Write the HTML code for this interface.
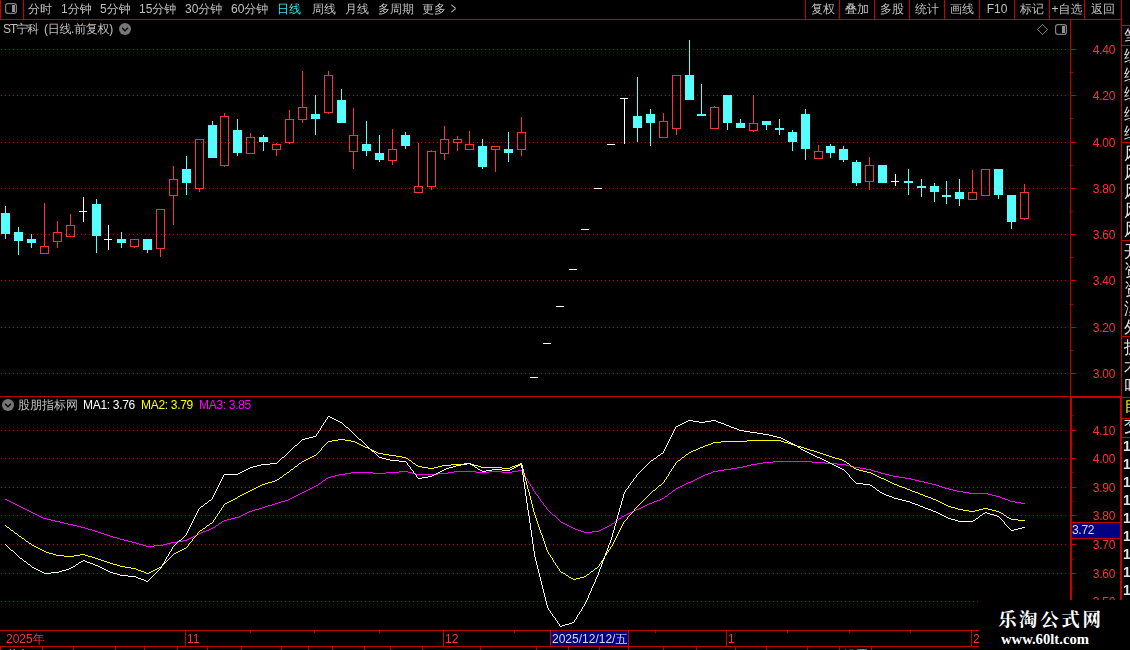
<!DOCTYPE html>
<html lang="zh-CN"><head><meta charset="utf-8"><title>ST宁科 日线</title>
<style>
html,body{margin:0;padding:0;background:#000;}
body{width:1130px;height:650px;overflow:hidden;position:relative;font-family:"Liberation Sans","WenQuanYi Zen Hei",sans-serif;}
#chart{position:absolute;left:0;top:0;}
#txt{position:absolute;left:0;top:0;width:1130px;height:650px;will-change:transform;}
.t{position:absolute;color:#c0c0c0;font-size:12px;line-height:15px;white-space:nowrap;}
.ax{letter-spacing:-0.3px;}
#strip{position:absolute;left:1123px;top:20px;width:7px;height:580px;overflow:hidden;}
#strip .s{position:absolute;left:1px;font-size:17px;line-height:17px;width:18px;margin-top:-21px;}
#strip .b{font-weight:bold;font-size:14px;left:0px;}
#bot{position:absolute;left:0;top:647px;width:979px;height:3px;overflow:hidden;}
#wm{position:absolute;left:979px;top:600px;width:151px;height:50px;background:#000;overflow:hidden;}
#wm1{position:absolute;left:19px;top:5px;font:bold 18.5px/30px "Liberation Serif","Noto Serif CJK SC",serif;letter-spacing:2.6px;color:#fff;white-space:nowrap;}
#wm2{position:absolute;left:22px;top:29px;font:bold 14.67px/20px "Liberation Serif",serif;color:#fff;white-space:nowrap;}
</style></head><body>
<svg id="chart" width="1130" height="650" viewBox="0 0 1130 650" shape-rendering="crispEdges">
<line x1="1" x2="1067" y1="49.5" y2="49.5" stroke="#c40000" stroke-width="1" stroke-dasharray="1 3"/>
<line x1="1" x2="1067" y1="95.5" y2="95.5" stroke="#c40000" stroke-width="1" stroke-dasharray="1 3"/>
<line x1="1" x2="1067" y1="142.5" y2="142.5" stroke="#c40000" stroke-width="1" stroke-dasharray="1 3"/>
<line x1="1" x2="1067" y1="188.5" y2="188.5" stroke="#c40000" stroke-width="1" stroke-dasharray="1 3"/>
<line x1="1" x2="1067" y1="234.5" y2="234.5" stroke="#c40000" stroke-width="1" stroke-dasharray="1 3"/>
<line x1="1" x2="1067" y1="280.5" y2="280.5" stroke="#c40000" stroke-width="1" stroke-dasharray="1 3"/>
<line x1="1" x2="1067" y1="327.5" y2="327.5" stroke="#c40000" stroke-width="1" stroke-dasharray="1 3"/>
<line x1="1" x2="1067" y1="373.5" y2="373.5" stroke="#c40000" stroke-width="1" stroke-dasharray="1 3"/>
<line x1="1" x2="1067" y1="430.5" y2="430.5" stroke="#c40000" stroke-width="1" stroke-dasharray="1 3"/>
<line x1="1" x2="1067" y1="458.5" y2="458.5" stroke="#c40000" stroke-width="1" stroke-dasharray="1 3"/>
<line x1="1" x2="1067" y1="487.5" y2="487.5" stroke="#c40000" stroke-width="1" stroke-dasharray="1 3"/>
<line x1="1" x2="1067" y1="515.5" y2="515.5" stroke="#c40000" stroke-width="1" stroke-dasharray="1 3"/>
<line x1="1" x2="1067" y1="544.5" y2="544.5" stroke="#c40000" stroke-width="1" stroke-dasharray="1 3"/>
<line x1="1" x2="1067" y1="573.5" y2="573.5" stroke="#c40000" stroke-width="1" stroke-dasharray="1 3"/>
<line x1="1" x2="1067" y1="601.5" y2="601.5" stroke="#c40000" stroke-width="1" stroke-dasharray="1 3"/>
<rect x="0" y="19" width="1122" height="1" fill="#c40000"/>
<rect x="0" y="0" width="1" height="20" fill="#c40000"/>
<rect x="23" y="0" width="1" height="20" fill="#c40000"/>
<rect x="805" y="0" width="1" height="20" fill="#c40000"/>
<rect x="839" y="0" width="1" height="20" fill="#c40000"/>
<rect x="874" y="0" width="1" height="20" fill="#c40000"/>
<rect x="909" y="0" width="1" height="20" fill="#c40000"/>
<rect x="944" y="0" width="1" height="20" fill="#c40000"/>
<rect x="979" y="0" width="1" height="20" fill="#c40000"/>
<rect x="1014" y="0" width="1" height="20" fill="#c40000"/>
<rect x="1049" y="0" width="1" height="20" fill="#c40000"/>
<rect x="1084" y="0" width="1" height="20" fill="#c40000"/>
<rect x="1121" y="0" width="1" height="396" fill="#c40000"/>
<rect x="1070" y="19" width="1" height="377" fill="#c40000"/>
<rect x="0" y="396" width="1070" height="1" fill="#c40000"/>
<rect x="1070" y="396" width="52" height="2" fill="#c40000"/>
<rect x="1122" y="397" width="8" height="1" fill="#c40000"/>
<rect x="1070" y="396" width="2" height="204" fill="#c40000"/>
<rect x="1120" y="396" width="2" height="204" fill="#c40000"/>
<rect x="0" y="630" width="979" height="1" fill="#c40000"/>
<rect x="0" y="646" width="979" height="1" fill="#c40000"/>
<rect x="0" y="646" width="1" height="4" fill="#c40000"/>
<rect x="1071" y="49" width="5" height="1" fill="#c40000"/>
<rect x="1071" y="72" width="2" height="1" fill="#c40000"/>
<rect x="1071" y="95" width="5" height="1" fill="#c40000"/>
<rect x="1071" y="118" width="2" height="1" fill="#c40000"/>
<rect x="1071" y="142" width="5" height="1" fill="#c40000"/>
<rect x="1071" y="165" width="2" height="1" fill="#c40000"/>
<rect x="1071" y="188" width="5" height="1" fill="#c40000"/>
<rect x="1071" y="211" width="2" height="1" fill="#c40000"/>
<rect x="1071" y="234" width="5" height="1" fill="#c40000"/>
<rect x="1071" y="257" width="2" height="1" fill="#c40000"/>
<rect x="1071" y="280" width="5" height="1" fill="#c40000"/>
<rect x="1071" y="304" width="2" height="1" fill="#c40000"/>
<rect x="1071" y="327" width="5" height="1" fill="#c40000"/>
<rect x="1071" y="350" width="2" height="1" fill="#c40000"/>
<rect x="1071" y="373" width="5" height="1" fill="#c40000"/>
<rect x="1072" y="430" width="4" height="1" fill="#c40000"/>
<rect x="1072" y="458" width="4" height="1" fill="#c40000"/>
<rect x="1072" y="487" width="4" height="1" fill="#c40000"/>
<rect x="1072" y="515" width="4" height="1" fill="#c40000"/>
<rect x="1072" y="544" width="4" height="1" fill="#c40000"/>
<rect x="1072" y="573" width="4" height="1" fill="#c40000"/>
<rect x="1072" y="415" width="1" height="1" fill="#c40000"/>
<rect x="1072" y="444" width="1" height="1" fill="#c40000"/>
<rect x="1072" y="472" width="1" height="1" fill="#c40000"/>
<rect x="1072" y="501" width="1" height="1" fill="#c40000"/>
<rect x="1072" y="530" width="1" height="1" fill="#c40000"/>
<rect x="1072" y="559" width="1" height="1" fill="#c40000"/>
<rect x="1072" y="587" width="1" height="1" fill="#c40000"/>
<rect x="185" y="630" width="1" height="16" fill="#c40000"/>
<rect x="443" y="630" width="1" height="16" fill="#c40000"/>
<rect x="726" y="630" width="1" height="16" fill="#c40000"/>
<rect x="971" y="630" width="1" height="16" fill="#c40000"/>
<rect x="250" y="630" width="1" height="3" fill="#c40000"/>
<rect x="314" y="630" width="1" height="3" fill="#c40000"/>
<rect x="379" y="630" width="1" height="3" fill="#c40000"/>
<rect x="514" y="630" width="1" height="3" fill="#c40000"/>
<rect x="655" y="630" width="1" height="3" fill="#c40000"/>
<rect x="787" y="630" width="1" height="3" fill="#c40000"/>
<rect x="849" y="630" width="1" height="3" fill="#c40000"/>
<rect x="910" y="630" width="1" height="3" fill="#c40000"/>
<rect x="42" y="646" width="1" height="4" fill="#c40000"/>
<rect x="73" y="646" width="1" height="4" fill="#c40000"/>
<rect x="115" y="646" width="1" height="4" fill="#c40000"/>
<rect x="144" y="646" width="1" height="4" fill="#c40000"/>
<rect x="177" y="646" width="1" height="4" fill="#c40000"/>
<rect x="207" y="646" width="1" height="4" fill="#c40000"/>
<rect x="241" y="646" width="1" height="4" fill="#c40000"/>
<rect x="281" y="646" width="1" height="4" fill="#c40000"/>
<rect x="308" y="646" width="1" height="4" fill="#c40000"/>
<rect x="332" y="646" width="1" height="4" fill="#c40000"/>
<rect x="364" y="646" width="1" height="4" fill="#c40000"/>
<rect x="390" y="646" width="1" height="4" fill="#c40000"/>
<rect x="422" y="646" width="1" height="4" fill="#c40000"/>
<rect x="480" y="646" width="1" height="4" fill="#c40000"/>
<rect x="536" y="646" width="1" height="4" fill="#c40000"/>
<rect x="568" y="646" width="1" height="4" fill="#c40000"/>
<rect x="599" y="646" width="1" height="4" fill="#c40000"/>
<rect x="628" y="646" width="1" height="4" fill="#c40000"/>
<rect x="663" y="646" width="1" height="4" fill="#c40000"/>
<rect x="696" y="646" width="1" height="4" fill="#c40000"/>
<rect x="735" y="646" width="1" height="4" fill="#c40000"/>
<rect x="766" y="646" width="1" height="4" fill="#c40000"/>
<rect x="807" y="646" width="1" height="4" fill="#c40000"/>
<rect x="871" y="646" width="1" height="4" fill="#c40000"/>
<rect x="839" y="646" width="1" height="4" fill="#c40000"/>
<rect x="1122" y="25" width="8" height="1" fill="#c40000"/>
<rect x="1122" y="45" width="8" height="1" fill="#c40000"/>
<rect x="1122" y="142" width="8" height="1" fill="#c40000"/>
<rect x="1122" y="240" width="8" height="1" fill="#c40000"/>
<rect x="1122" y="336" width="8" height="1" fill="#c40000"/>
<rect x="1122" y="418" width="8" height="1" fill="#c40000"/>
<rect x="1122" y="437" width="8" height="1" fill="#c40000"/>
<rect x="5" y="206" width="1" height="33" fill="#54ffff"/>
<rect x="1" y="213" width="9" height="21" fill="#54ffff"/>
<rect x="18" y="227" width="1" height="28" fill="#54ffff"/>
<rect x="14" y="232" width="9" height="9" fill="#54ffff"/>
<rect x="31" y="234" width="1" height="14" fill="#54ffff"/>
<rect x="27" y="239" width="9" height="4" fill="#54ffff"/>
<rect x="44" y="203" width="1" height="43" fill="#ff3232"/>
<rect x="40.5" y="246.5" width="8" height="7" fill="none" stroke="#ff3232" stroke-width="1"/>
<rect x="57" y="221" width="1" height="11" fill="#ff3232"/>
<rect x="57" y="242" width="1" height="6" fill="#ff3232"/>
<rect x="53.5" y="232.5" width="8" height="9" fill="none" stroke="#ff3232" stroke-width="1"/>
<rect x="70" y="214" width="1" height="11" fill="#ff3232"/>
<rect x="66.5" y="225.5" width="8" height="11" fill="none" stroke="#ff3232" stroke-width="1"/>
<rect x="83" y="197" width="1" height="25" fill="#fff"/>
<rect x="79" y="211" width="8" height="1" fill="#fff"/>
<rect x="96" y="199" width="1" height="54" fill="#54ffff"/>
<rect x="92" y="204" width="9" height="32" fill="#54ffff"/>
<rect x="108" y="225" width="1" height="25" fill="#fff"/>
<rect x="104" y="239" width="8" height="1" fill="#fff"/>
<rect x="121" y="232" width="1" height="16" fill="#54ffff"/>
<rect x="117" y="239" width="9" height="4" fill="#54ffff"/>
<rect x="134" y="247" width="1" height="1" fill="#ff3232"/>
<rect x="130.5" y="239.5" width="8" height="7" fill="none" stroke="#ff3232" stroke-width="1"/>
<rect x="147" y="239" width="1" height="14" fill="#54ffff"/>
<rect x="143" y="239" width="9" height="11" fill="#54ffff"/>
<rect x="160" y="249" width="1" height="8" fill="#ff3232"/>
<rect x="156.5" y="209.5" width="8" height="39" fill="none" stroke="#ff3232" stroke-width="1"/>
<rect x="173" y="166" width="1" height="13" fill="#ff3232"/>
<rect x="173" y="196" width="1" height="29" fill="#ff3232"/>
<rect x="169.5" y="179.5" width="8" height="16" fill="none" stroke="#ff3232" stroke-width="1"/>
<rect x="186" y="156" width="1" height="39" fill="#54ffff"/>
<rect x="182" y="169" width="9" height="14" fill="#54ffff"/>
<rect x="199" y="189" width="1" height="3" fill="#ff3232"/>
<rect x="195.5" y="139.5" width="8" height="49" fill="none" stroke="#ff3232" stroke-width="1"/>
<rect x="212" y="121" width="1" height="37" fill="#54ffff"/>
<rect x="208" y="125" width="9" height="33" fill="#54ffff"/>
<rect x="224" y="113" width="1" height="3" fill="#ff3232"/>
<rect x="224" y="166" width="1" height="1" fill="#ff3232"/>
<rect x="220.5" y="116.5" width="8" height="49" fill="none" stroke="#ff3232" stroke-width="1"/>
<rect x="237" y="119" width="1" height="37" fill="#54ffff"/>
<rect x="233" y="130" width="9" height="23" fill="#54ffff"/>
<rect x="250" y="133" width="1" height="4" fill="#ff3232"/>
<rect x="246.5" y="137.5" width="8" height="16" fill="none" stroke="#ff3232" stroke-width="1"/>
<rect x="263" y="135" width="1" height="16" fill="#54ffff"/>
<rect x="259" y="137" width="9" height="5" fill="#54ffff"/>
<rect x="276" y="143" width="1" height="1" fill="#ff3232"/>
<rect x="276" y="150" width="1" height="6" fill="#ff3232"/>
<rect x="272.5" y="144.5" width="8" height="5" fill="none" stroke="#ff3232" stroke-width="1"/>
<rect x="289" y="110" width="1" height="9" fill="#ff3232"/>
<rect x="289" y="143" width="1" height="1" fill="#ff3232"/>
<rect x="285.5" y="119.5" width="8" height="23" fill="none" stroke="#ff3232" stroke-width="1"/>
<rect x="302" y="71" width="1" height="36" fill="#ff3232"/>
<rect x="302" y="120" width="1" height="3" fill="#ff3232"/>
<rect x="298.5" y="107.5" width="8" height="12" fill="none" stroke="#ff3232" stroke-width="1"/>
<rect x="315" y="95" width="1" height="40" fill="#54ffff"/>
<rect x="311" y="114" width="9" height="5" fill="#54ffff"/>
<rect x="328" y="71" width="1" height="4" fill="#ff3232"/>
<rect x="328" y="113" width="1" height="1" fill="#ff3232"/>
<rect x="324.5" y="75.5" width="8" height="37" fill="none" stroke="#ff3232" stroke-width="1"/>
<rect x="341" y="89" width="1" height="34" fill="#54ffff"/>
<rect x="337" y="100" width="9" height="23" fill="#54ffff"/>
<rect x="353" y="108" width="1" height="27" fill="#ff3232"/>
<rect x="353" y="152" width="1" height="17" fill="#ff3232"/>
<rect x="349.5" y="135.5" width="8" height="16" fill="none" stroke="#ff3232" stroke-width="1"/>
<rect x="366" y="121" width="1" height="35" fill="#54ffff"/>
<rect x="362" y="144" width="9" height="7" fill="#54ffff"/>
<rect x="379" y="135" width="1" height="27" fill="#54ffff"/>
<rect x="375" y="153" width="9" height="7" fill="#54ffff"/>
<rect x="392" y="129" width="1" height="20" fill="#ff3232"/>
<rect x="392" y="161" width="1" height="4" fill="#ff3232"/>
<rect x="388.5" y="149.5" width="8" height="11" fill="none" stroke="#ff3232" stroke-width="1"/>
<rect x="405" y="132" width="1" height="17" fill="#54ffff"/>
<rect x="401" y="135" width="9" height="11" fill="#54ffff"/>
<rect x="418" y="143" width="1" height="43" fill="#ff3232"/>
<rect x="414.5" y="186.5" width="8" height="6" fill="none" stroke="#ff3232" stroke-width="1"/>
<rect x="431" y="150" width="1" height="1" fill="#ff3232"/>
<rect x="431" y="187" width="1" height="3" fill="#ff3232"/>
<rect x="427.5" y="151.5" width="8" height="35" fill="none" stroke="#ff3232" stroke-width="1"/>
<rect x="444" y="126" width="1" height="13" fill="#ff3232"/>
<rect x="444" y="154" width="1" height="6" fill="#ff3232"/>
<rect x="440.5" y="139.5" width="8" height="14" fill="none" stroke="#ff3232" stroke-width="1"/>
<rect x="457" y="136" width="1" height="3" fill="#ff3232"/>
<rect x="457" y="143" width="1" height="8" fill="#ff3232"/>
<rect x="453.5" y="139.5" width="8" height="3" fill="none" stroke="#ff3232" stroke-width="1"/>
<rect x="469" y="131" width="1" height="13" fill="#ff3232"/>
<rect x="465.5" y="144.5" width="8" height="5" fill="none" stroke="#ff3232" stroke-width="1"/>
<rect x="482" y="139" width="1" height="30" fill="#54ffff"/>
<rect x="478" y="146" width="9" height="21" fill="#54ffff"/>
<rect x="495" y="150" width="1" height="22" fill="#ff3232"/>
<rect x="491.5" y="146.5" width="8" height="3" fill="none" stroke="#ff3232" stroke-width="1"/>
<rect x="508" y="132" width="1" height="30" fill="#54ffff"/>
<rect x="504" y="149" width="9" height="4" fill="#54ffff"/>
<rect x="521" y="117" width="1" height="15" fill="#ff3232"/>
<rect x="521" y="150" width="1" height="6" fill="#ff3232"/>
<rect x="517.5" y="132.5" width="8" height="17" fill="none" stroke="#ff3232" stroke-width="1"/>
<rect x="530" y="377" width="8" height="1" fill="#fff"/>
<rect x="543" y="343" width="8" height="1" fill="#fff"/>
<rect x="556" y="306" width="8" height="1" fill="#fff"/>
<rect x="569" y="269" width="8" height="1" fill="#fff"/>
<rect x="581" y="229" width="8" height="1" fill="#fff"/>
<rect x="594" y="188" width="8" height="1" fill="#fff"/>
<rect x="607" y="144" width="8" height="1" fill="#fff"/>
<rect x="624" y="98" width="1" height="46" fill="#fff"/>
<rect x="620" y="98" width="8" height="1" fill="#fff"/>
<rect x="637" y="77" width="1" height="65" fill="#54ffff"/>
<rect x="633" y="116" width="9" height="12" fill="#54ffff"/>
<rect x="650" y="109" width="1" height="37" fill="#54ffff"/>
<rect x="646" y="114" width="9" height="9" fill="#54ffff"/>
<rect x="663" y="113" width="1" height="8" fill="#ff3232"/>
<rect x="659.5" y="121.5" width="8" height="16" fill="none" stroke="#ff3232" stroke-width="1"/>
<rect x="676" y="129" width="1" height="6" fill="#ff3232"/>
<rect x="672.5" y="75.5" width="8" height="53" fill="none" stroke="#ff3232" stroke-width="1"/>
<rect x="689" y="40" width="1" height="60" fill="#54ffff"/>
<rect x="685" y="75" width="9" height="25" fill="#54ffff"/>
<rect x="701" y="84" width="1" height="32" fill="#54ffff"/>
<rect x="697" y="114" width="9" height="2" fill="#54ffff"/>
<rect x="714" y="106" width="1" height="1" fill="#ff3232"/>
<rect x="710.5" y="107.5" width="8" height="21" fill="none" stroke="#ff3232" stroke-width="1"/>
<rect x="727" y="95" width="1" height="35" fill="#54ffff"/>
<rect x="723" y="95" width="9" height="28" fill="#54ffff"/>
<rect x="740" y="119" width="1" height="9" fill="#54ffff"/>
<rect x="736" y="123" width="9" height="5" fill="#54ffff"/>
<rect x="753" y="95" width="1" height="28" fill="#ff3232"/>
<rect x="753" y="131" width="1" height="1" fill="#ff3232"/>
<rect x="749.5" y="123.5" width="8" height="7" fill="none" stroke="#ff3232" stroke-width="1"/>
<rect x="766" y="121" width="1" height="9" fill="#54ffff"/>
<rect x="762" y="121" width="9" height="4" fill="#54ffff"/>
<rect x="779" y="119" width="1" height="16" fill="#54ffff"/>
<rect x="775" y="128" width="9" height="2" fill="#54ffff"/>
<rect x="792" y="130" width="1" height="21" fill="#54ffff"/>
<rect x="788" y="132" width="9" height="10" fill="#54ffff"/>
<rect x="805" y="109" width="1" height="51" fill="#54ffff"/>
<rect x="801" y="114" width="9" height="35" fill="#54ffff"/>
<rect x="818" y="145" width="1" height="6" fill="#ff3232"/>
<rect x="814.5" y="151.5" width="8" height="7" fill="none" stroke="#ff3232" stroke-width="1"/>
<rect x="830" y="144" width="1" height="14" fill="#54ffff"/>
<rect x="826" y="146" width="9" height="7" fill="#54ffff"/>
<rect x="843" y="146" width="1" height="16" fill="#54ffff"/>
<rect x="839" y="149" width="9" height="11" fill="#54ffff"/>
<rect x="856" y="160" width="1" height="26" fill="#54ffff"/>
<rect x="852" y="162" width="9" height="21" fill="#54ffff"/>
<rect x="869" y="157" width="1" height="8" fill="#ff3232"/>
<rect x="869" y="182" width="1" height="8" fill="#ff3232"/>
<rect x="865.5" y="165.5" width="8" height="16" fill="none" stroke="#ff3232" stroke-width="1"/>
<rect x="878" y="165" width="9" height="18" fill="#54ffff"/>
<rect x="895" y="174" width="1" height="12" fill="#fff"/>
<rect x="891" y="181" width="8" height="1" fill="#fff"/>
<rect x="908" y="169" width="1" height="26" fill="#54ffff"/>
<rect x="904" y="181" width="9" height="2" fill="#54ffff"/>
<rect x="921" y="179" width="1" height="18" fill="#54ffff"/>
<rect x="917" y="186" width="9" height="2" fill="#54ffff"/>
<rect x="934" y="183" width="1" height="19" fill="#54ffff"/>
<rect x="930" y="186" width="9" height="6" fill="#54ffff"/>
<rect x="946" y="181" width="1" height="23" fill="#54ffff"/>
<rect x="942" y="195" width="9" height="2" fill="#54ffff"/>
<rect x="959" y="179" width="1" height="27" fill="#54ffff"/>
<rect x="955" y="192" width="9" height="7" fill="#54ffff"/>
<rect x="972" y="170" width="1" height="22" fill="#ff3232"/>
<rect x="968.5" y="192.5" width="8" height="7" fill="none" stroke="#ff3232" stroke-width="1"/>
<rect x="981.5" y="169.5" width="8" height="26" fill="none" stroke="#ff3232" stroke-width="1"/>
<rect x="998" y="169" width="1" height="30" fill="#54ffff"/>
<rect x="994" y="169" width="9" height="26" fill="#54ffff"/>
<rect x="1011" y="195" width="1" height="34" fill="#54ffff"/>
<rect x="1007" y="195" width="9" height="27" fill="#54ffff"/>
<rect x="1024" y="184" width="1" height="8" fill="#ff3232"/>
<rect x="1024" y="219" width="1" height="1" fill="#ff3232"/>
<rect x="1020.5" y="192.5" width="8" height="26" fill="none" stroke="#ff3232" stroke-width="1"/>
<path d="M5 499.5h2M7 500.5h2M9 501.5h2M11 502.5h2M13 503.5h2M15 504.5h2M17 505.5h2M19 506.5h2M21 507.5h2M23 508.5h2M25 509.5h2M27 510.5h2M29 511.5h2M31 512.5h2M33 513.5h2M35 514.5h2M37 515.5h2M39 516.5h2M41 517.5h2M43 518.5h4M47 519.5h4M51 520.5h4M55 521.5h5M60 522.5h4M64 523.5h4M68 524.5h5M73 525.5h4M77 526.5h4M81 527.5h4M85 528.5h3M88 529.5h4M92 530.5h3M95 531.5h3M98 532.5h3M101 533.5h3M104 534.5h3M107 535.5h3M110 536.5h3M113 537.5h4M117 538.5h3M120 539.5h4M124 540.5h4M128 541.5h4M132 542.5h4M136 543.5h3M139 544.5h4M143 545.5h3M146 546.5h8M154 545.5h9M163 544.5h4M167 543.5h4M171 542.5h6M177 541.5h6M183 540.5h4M187 539.5h2M189 538.5h2M191 537.5h2M193 536.5h2M195 535.5h2M197 534.5h2M199 533.5h2M201 532.5h2M203 531.5h3M206 530.5h3M209 529.5h2M211 528.5h2M213 527.5h2M215 526.5h1M216 525.5h2M218 524.5h1M219 523.5h2M221 522.5h1M222 521.5h2M224 520.5h3M227 519.5h4M231 518.5h4M235 517.5h4M239 516.5h2M241 515.5h2M243 514.5h2M245 513.5h2M247 512.5h2M249 511.5h3M252 510.5h3M255 509.5h4M259 508.5h3M262 507.5h3M265 506.5h3M268 505.5h4M272 504.5h3M275 503.5h3M278 502.5h3M281 501.5h4M285 500.5h3M288 499.5h2M290 498.5h2M292 497.5h2M294 496.5h2M296 495.5h2M298 494.5h2M300 493.5h2M302 492.5h2M304 491.5h2M306 490.5h2M308 489.5h2M310 488.5h2M312 487.5h2M314 486.5h2M316 485.5h2M318 484.5h1M319 483.5h2M321 482.5h1M322 481.5h1M323 480.5h2M325 479.5h1M326 478.5h2M328 477.5h3M331 476.5h4M335 475.5h4M339 474.5h6M345 473.5h6M351 472.5h22M373 473.5h13M386 472.5h13M399 471.5h9M408 472.5h4M412 473.5h4M416 474.5h22M438 473.5h10M448 472.5h6M454 471.5h22M476 472.5h13M489 471.5h13M502 472.5h10M512 471.5h6M518 470.5h4M522 471.5h1M522 472.5h1M523 473.5h1M523 474.5h1M524 475.5h1M525 476.5h1M525 477.5h1M526 478.5h1M527 479.5h1M527 480.5h1M528 481.5h1M528 482.5h1M529 483.5h1M530 484.5h1M530 485.5h1M531 486.5h1M532 487.5h1M532 488.5h1M533 489.5h1M533 490.5h1M534 491.5h1M535 492.5h1M535 493.5h1M536 494.5h1M537 495.5h1M538 496.5h1M538 497.5h1M539 498.5h1M540 499.5h1M540 500.5h1M541 501.5h1M542 502.5h1M543 503.5h1M543 504.5h1M544 505.5h1M545 506.5h1M546 507.5h1M546 508.5h1M547 509.5h1M548 510.5h1M549 511.5h1M550 512.5h1M551 513.5h1M552 514.5h1M553 515.5h2M555 516.5h1M556 517.5h1M557 518.5h1M558 519.5h1M559 520.5h1M560 521.5h1M561 522.5h2M563 523.5h2M565 524.5h2M567 525.5h2M569 526.5h2M571 527.5h2M573 528.5h2M575 529.5h3M578 530.5h3M581 531.5h3M584 532.5h8M592 531.5h7M599 530.5h2M601 529.5h2M603 528.5h2M605 527.5h2M607 526.5h2M609 525.5h2M611 524.5h1M612 523.5h2M614 522.5h1M615 521.5h2M617 520.5h1M618 519.5h1M619 518.5h2M621 517.5h1M622 516.5h2M624 515.5h2M626 514.5h2M628 513.5h2M630 512.5h2M632 511.5h2M634 510.5h2M636 509.5h3M639 508.5h2M641 507.5h2M643 506.5h2M645 505.5h2M647 504.5h2M649 503.5h3M652 502.5h2M654 501.5h3M657 500.5h3M660 499.5h2M662 498.5h2M664 497.5h1M665 496.5h2M667 495.5h1M668 494.5h1M669 493.5h2M671 492.5h1M672 491.5h1M673 490.5h2M675 489.5h1M676 488.5h2M678 487.5h2M680 486.5h2M682 485.5h2M684 484.5h2M686 483.5h2M688 482.5h3M691 481.5h2M693 480.5h2M695 479.5h2M697 478.5h2M699 477.5h2M701 476.5h2M703 475.5h2M705 474.5h3M708 473.5h3M711 472.5h2M713 471.5h5M718 470.5h6M724 469.5h7M731 468.5h6M737 467.5h6M743 466.5h4M747 465.5h4M751 464.5h6M757 463.5h6M763 462.5h10M773 461.5h39M812 462.5h13M825 463.5h12M837 464.5h9M846 465.5h4M850 466.5h4M854 467.5h6M860 468.5h6M866 469.5h5M871 470.5h3M874 471.5h4M878 472.5h3M881 473.5h4M885 474.5h4M889 475.5h4M893 476.5h6M899 477.5h6M905 478.5h6M911 479.5h4M915 480.5h4M919 481.5h5M924 482.5h4M928 483.5h4M932 484.5h4M936 485.5h3M939 486.5h3M942 487.5h3M945 488.5h4M949 489.5h4M953 490.5h4M957 491.5h6M963 492.5h6M969 493.5h19M988 494.5h4M992 495.5h4M996 496.5h4M1000 497.5h2M1002 498.5h3M1005 499.5h3M1008 500.5h2M1010 501.5h5M1015 502.5h6M1021 503.5h4" fill="none" stroke="#ff00ff" stroke-width="1"/>
<path d="M5 525.5h1M6 526.5h1M7 527.5h2M9 528.5h1M10 529.5h1M11 530.5h2M13 531.5h1M14 532.5h1M15 533.5h2M17 534.5h1M18 535.5h1M19 536.5h2M21 537.5h1M22 538.5h2M24 539.5h1M25 540.5h1M26 541.5h2M28 542.5h1M29 543.5h2M31 544.5h1M32 545.5h2M34 546.5h2M36 547.5h2M38 548.5h2M40 549.5h2M42 550.5h2M44 551.5h2M46 552.5h3M49 553.5h4M53 554.5h3M56 555.5h8M64 556.5h10M74 555.5h6M80 554.5h5M85 555.5h3M88 556.5h4M92 557.5h3M95 558.5h3M98 559.5h3M101 560.5h3M104 561.5h3M107 562.5h3M110 563.5h3M113 564.5h4M117 565.5h3M120 566.5h5M125 567.5h6M131 568.5h5M136 569.5h2M138 570.5h3M141 571.5h3M144 572.5h2M146 573.5h3M149 572.5h2M151 571.5h2M153 570.5h2M155 569.5h2M157 568.5h2M159 567.5h2M161 566.5h1M162 565.5h1M163 564.5h1M164 563.5h1M165 562.5h1M166 561.5h1M167 560.5h1M168 559.5h1M169 558.5h1M170 557.5h1M171 556.5h1M172 555.5h1M173 554.5h1M174 553.5h2M176 552.5h2M178 551.5h2M180 550.5h2M182 549.5h2M184 548.5h2M186 547.5h1M187 546.5h1M188 544.5h1M188 545.5h1M189 543.5h1M190 542.5h1M191 541.5h1M192 539.5h1M192 540.5h1M193 538.5h1M194 537.5h1M195 536.5h1M196 535.5h1M197 533.5h1M197 534.5h1M198 532.5h1M199 531.5h1M200 530.5h2M202 529.5h1M203 528.5h2M205 527.5h1M206 526.5h1M207 525.5h2M209 524.5h1M210 523.5h2M212 522.5h1M213 520.5h1M213 521.5h1M214 519.5h1M215 517.5h1M215 518.5h1M216 516.5h1M217 514.5h1M217 515.5h1M218 513.5h1M219 511.5h1M219 512.5h1M220 510.5h1M221 508.5h1M221 509.5h1M222 507.5h1M223 505.5h1M223 506.5h1M224 504.5h1M225 503.5h2M227 502.5h2M229 501.5h2M231 500.5h2M233 499.5h2M235 498.5h2M237 497.5h1M238 496.5h2M240 495.5h2M242 494.5h2M244 493.5h2M246 492.5h2M248 491.5h2M250 490.5h2M252 489.5h2M254 488.5h2M256 487.5h2M258 486.5h2M260 485.5h2M262 484.5h3M265 483.5h3M268 482.5h4M272 481.5h3M275 480.5h2M277 479.5h2M279 478.5h1M280 477.5h2M282 476.5h1M283 475.5h1M284 474.5h2M286 473.5h1M287 472.5h2M289 471.5h1M290 470.5h1M291 469.5h2M293 468.5h1M294 467.5h1M295 466.5h2M297 465.5h1M298 464.5h1M299 463.5h2M301 462.5h1M302 461.5h2M304 460.5h2M306 459.5h2M308 458.5h2M310 457.5h2M312 456.5h2M314 455.5h2M316 454.5h1M317 453.5h1M318 452.5h1M319 451.5h1M320 450.5h1M321 448.5h1M321 449.5h1M322 447.5h1M323 446.5h1M324 445.5h1M325 444.5h1M326 443.5h1M327 442.5h1M328 441.5h4M332 440.5h6M338 439.5h7M345 440.5h6M351 441.5h4M355 442.5h2M357 443.5h2M359 444.5h2M361 445.5h2M363 446.5h2M365 447.5h3M368 448.5h2M370 449.5h2M372 450.5h2M374 451.5h2M376 452.5h2M378 453.5h5M383 454.5h6M389 455.5h7M396 456.5h6M402 457.5h4M406 458.5h2M408 459.5h1M409 460.5h2M411 461.5h1M412 462.5h1M413 463.5h2M415 464.5h1M416 465.5h2M418 466.5h4M422 467.5h6M428 468.5h6M434 467.5h4M438 466.5h4M442 465.5h9M451 464.5h13M464 463.5h7M471 464.5h3M474 465.5h4M478 466.5h3M481 467.5h21M502 468.5h8M510 467.5h2M512 466.5h3M515 465.5h3M518 464.5h2M520 463.5h2M521 464.5h1M522 465.5h1M522 466.5h1M522 467.5h1M522 468.5h1M523 469.5h1M523 470.5h1M523 471.5h1M523 472.5h1M524 473.5h1M524 474.5h1M524 475.5h1M524 476.5h1M525 477.5h1M525 478.5h1M525 479.5h1M525 480.5h1M526 481.5h1M526 482.5h1M526 483.5h1M526 484.5h1M527 485.5h1M527 486.5h1M527 487.5h1M527 488.5h1M528 489.5h1M528 490.5h1M528 491.5h1M529 492.5h1M529 493.5h1M529 494.5h1M529 495.5h1M530 496.5h1M530 497.5h1M530 498.5h1M530 499.5h1M531 500.5h1M531 501.5h1M531 502.5h1M531 503.5h1M532 504.5h1M532 505.5h1M532 506.5h1M532 507.5h1M533 508.5h1M533 509.5h1M533 510.5h1M533 511.5h1M534 512.5h1M534 513.5h1M534 514.5h1M535 515.5h1M535 516.5h1M535 517.5h1M536 518.5h1M536 519.5h1M536 520.5h1M537 521.5h1M537 522.5h1M537 523.5h1M538 524.5h1M538 525.5h1M538 526.5h1M539 527.5h1M539 528.5h1M539 529.5h1M540 530.5h1M540 531.5h1M540 532.5h1M541 533.5h1M541 534.5h1M542 535.5h1M542 536.5h1M542 537.5h1M543 538.5h1M543 539.5h1M543 540.5h1M544 541.5h1M544 542.5h1M544 543.5h1M545 544.5h1M545 545.5h1M545 546.5h1M546 547.5h1M546 548.5h1M546 549.5h1M547 550.5h1M547 551.5h1M548 552.5h1M548 553.5h1M549 554.5h1M550 555.5h1M550 556.5h1M551 557.5h1M552 558.5h1M552 559.5h1M553 560.5h1M553 561.5h1M554 562.5h1M555 563.5h1M555 564.5h1M556 565.5h1M557 566.5h1M557 567.5h1M558 568.5h1M559 569.5h1M559 570.5h1M560 571.5h1M561 572.5h2M563 573.5h2M565 574.5h1M566 575.5h2M568 576.5h1M569 577.5h2M571 578.5h2M573 579.5h3M576 578.5h4M580 577.5h4M584 576.5h2M586 575.5h1M587 574.5h2M589 573.5h1M590 572.5h1M591 571.5h2M593 570.5h1M594 569.5h1M595 568.5h2M597 567.5h1M598 566.5h1M599 564.5h1M599 565.5h1M600 563.5h1M601 561.5h1M601 562.5h1M602 560.5h1M603 558.5h1M603 559.5h1M604 556.5h1M604 557.5h1M605 555.5h1M606 553.5h1M606 554.5h1M607 552.5h1M608 550.5h1M608 551.5h1M609 549.5h1M610 547.5h1M610 548.5h1M611 546.5h1M612 544.5h1M612 545.5h1M613 542.5h1M613 543.5h1M614 540.5h1M614 541.5h1M615 538.5h1M615 539.5h1M616 536.5h1M616 537.5h1M617 534.5h1M617 535.5h1M618 532.5h1M618 533.5h1M619 530.5h1M619 531.5h1M620 528.5h1M620 529.5h1M621 526.5h1M621 527.5h1M622 524.5h1M622 525.5h1M623 522.5h1M623 523.5h1M624 521.5h1M625 520.5h1M626 519.5h1M627 517.5h1M627 518.5h1M628 516.5h1M629 515.5h1M630 514.5h1M631 513.5h1M632 512.5h1M633 511.5h1M634 509.5h1M634 510.5h1M635 508.5h1M636 507.5h1M637 506.5h1M638 505.5h1M639 504.5h1M640 503.5h1M641 502.5h1M642 501.5h1M643 500.5h1M644 499.5h1M645 498.5h1M646 497.5h1M647 496.5h1M648 495.5h1M649 494.5h1M650 493.5h1M651 492.5h1M652 491.5h1M653 490.5h2M655 489.5h1M656 488.5h1M657 487.5h1M658 486.5h1M659 485.5h2M661 484.5h1M662 483.5h1M663 482.5h1M664 480.5h1M664 481.5h1M665 479.5h1M666 477.5h1M666 478.5h1M667 476.5h1M668 474.5h1M668 475.5h1M669 472.5h1M669 473.5h1M670 471.5h1M671 469.5h1M671 470.5h1M672 468.5h1M673 466.5h1M673 467.5h1M674 465.5h1M675 463.5h1M675 464.5h1M676 462.5h1M677 461.5h1M678 460.5h2M680 459.5h1M681 458.5h1M682 457.5h2M684 456.5h1M685 455.5h1M686 454.5h2M688 453.5h1M689 452.5h2M691 451.5h2M693 450.5h3M696 449.5h2M698 448.5h2M700 447.5h3M703 446.5h2M705 445.5h3M708 444.5h3M711 443.5h2M713 442.5h8M721 441.5h26M747 440.5h34M781 441.5h3M784 442.5h4M788 443.5h3M791 444.5h3M794 445.5h3M797 446.5h4M801 447.5h3M804 448.5h3M807 449.5h3M810 450.5h4M814 451.5h3M817 452.5h3M820 453.5h3M823 454.5h3M826 455.5h3M829 456.5h3M832 457.5h3M835 458.5h4M839 459.5h3M842 460.5h2M844 461.5h2M846 462.5h1M847 463.5h2M849 464.5h1M850 465.5h1M851 466.5h2M853 467.5h1M854 468.5h2M856 469.5h3M859 470.5h4M863 471.5h4M867 472.5h4M871 473.5h2M873 474.5h2M875 475.5h2M877 476.5h2M879 477.5h2M881 478.5h3M884 479.5h2M886 480.5h2M888 481.5h2M890 482.5h2M892 483.5h2M894 484.5h3M897 485.5h2M899 486.5h3M902 487.5h3M905 488.5h2M907 489.5h3M910 490.5h2M912 491.5h3M915 492.5h3M918 493.5h2M920 494.5h3M923 495.5h2M925 496.5h3M928 497.5h3M931 498.5h2M933 499.5h3M936 500.5h2M938 501.5h2M940 502.5h2M942 503.5h2M944 504.5h2M946 505.5h2M948 506.5h3M951 507.5h4M955 508.5h3M958 509.5h5M963 510.5h6M969 511.5h6M975 510.5h4M979 509.5h4M983 508.5h5M988 509.5h4M992 510.5h4M996 511.5h3M999 512.5h2M1001 513.5h2M1003 514.5h1M1004 515.5h2M1006 516.5h1M1007 517.5h2M1009 518.5h2M1011 519.5h7M1018 520.5h7" fill="none" stroke="#ffff00" stroke-width="1"/>
<path d="M5 544.5h1M6 545.5h1M7 546.5h1M8 547.5h1M9 548.5h1M10 549.5h1M11 550.5h2M13 551.5h1M14 552.5h1M15 553.5h1M16 554.5h1M17 555.5h1M18 556.5h1M19 557.5h1M20 558.5h2M22 559.5h1M23 560.5h1M24 561.5h2M26 562.5h1M27 563.5h1M28 564.5h2M30 565.5h1M31 566.5h1M32 567.5h2M34 568.5h2M36 569.5h2M38 570.5h2M40 571.5h2M42 572.5h2M44 573.5h7M51 572.5h8M59 571.5h3M62 570.5h4M66 569.5h3M69 568.5h2M71 567.5h2M73 566.5h2M75 565.5h1M76 564.5h2M78 563.5h1M79 562.5h2M81 561.5h2M83 560.5h2M85 561.5h2M87 562.5h3M90 563.5h3M93 564.5h2M95 565.5h3M98 566.5h2M100 567.5h2M102 568.5h2M104 569.5h2M106 570.5h2M108 571.5h2M110 572.5h3M113 573.5h4M117 574.5h3M120 575.5h8M128 576.5h8M136 577.5h2M138 578.5h3M141 579.5h3M144 580.5h2M146 581.5h2M148 580.5h1M149 579.5h1M150 578.5h1M151 577.5h1M152 576.5h1M153 575.5h1M154 574.5h1M155 573.5h1M156 572.5h1M157 571.5h1M158 570.5h1M159 569.5h1M160 568.5h1M161 566.5h1M161 567.5h1M162 564.5h1M162 565.5h1M163 563.5h1M164 561.5h1M164 562.5h1M165 559.5h1M165 560.5h1M166 557.5h1M166 558.5h1M167 556.5h1M168 554.5h1M168 555.5h1M169 552.5h1M169 553.5h1M170 551.5h1M171 549.5h1M171 550.5h1M172 547.5h1M172 548.5h1M173 546.5h1M174 545.5h1M175 544.5h1M176 543.5h1M177 542.5h1M178 541.5h1M179 540.5h2M181 539.5h1M182 538.5h1M183 537.5h1M184 536.5h1M185 535.5h1M186 533.5h1M186 534.5h1M187 531.5h1M187 532.5h1M188 529.5h1M188 530.5h1M189 527.5h1M189 528.5h1M190 525.5h1M190 526.5h1M191 523.5h1M191 524.5h1M192 521.5h1M192 522.5h1M193 519.5h1M193 520.5h1M194 517.5h1M194 518.5h1M195 515.5h1M195 516.5h1M196 513.5h1M196 514.5h1M197 511.5h1M197 512.5h1M198 509.5h1M198 510.5h1M199 508.5h1M200 507.5h1M201 506.5h2M203 505.5h1M204 504.5h1M205 503.5h2M207 502.5h1M208 501.5h1M209 500.5h2M211 499.5h1M212 497.5h1M212 498.5h1M213 495.5h1M213 496.5h1M214 493.5h1M214 494.5h1M215 491.5h1M215 492.5h1M216 489.5h1M216 490.5h1M217 487.5h1M217 488.5h1M218 485.5h1M218 486.5h1M219 483.5h1M219 484.5h1M220 481.5h1M220 482.5h1M221 479.5h1M221 480.5h1M222 477.5h1M222 478.5h1M223 475.5h1M223 476.5h1M224 474.5h14M238 473.5h2M240 472.5h2M242 471.5h2M244 470.5h2M246 469.5h2M248 468.5h2M250 467.5h3M253 466.5h4M257 465.5h4M261 464.5h9M270 463.5h7M277 462.5h1M278 461.5h1M279 460.5h1M280 459.5h1M281 458.5h1M282 457.5h2M284 456.5h1M285 455.5h1M286 454.5h1M287 453.5h1M288 452.5h1M289 451.5h1M290 450.5h1M291 449.5h1M292 448.5h1M293 447.5h1M294 446.5h1M295 445.5h2M297 444.5h1M298 443.5h1M299 442.5h1M300 441.5h1M301 440.5h1M302 439.5h3M305 438.5h4M309 437.5h4M313 436.5h3M316 434.5h1M316 435.5h1M317 433.5h1M318 431.5h1M318 432.5h1M319 430.5h1M320 428.5h1M320 429.5h1M321 426.5h1M321 427.5h1M322 425.5h1M323 423.5h1M323 424.5h1M324 422.5h1M325 420.5h1M325 421.5h1M326 419.5h1M327 417.5h1M327 418.5h1M328 416.5h2M330 417.5h2M332 418.5h2M334 419.5h2M336 420.5h2M338 421.5h2M340 422.5h2M342 423.5h1M343 424.5h1M344 425.5h1M345 426.5h1M346 427.5h2M348 428.5h1M349 429.5h1M350 430.5h1M351 431.5h1M352 432.5h1M353 433.5h1M354 434.5h1M355 435.5h1M356 436.5h1M357 437.5h1M358 438.5h1M359 439.5h2M361 440.5h1M362 441.5h1M363 442.5h1M364 443.5h1M365 444.5h1M366 445.5h1M367 446.5h1M368 447.5h1M369 448.5h1M370 449.5h1M371 450.5h1M372 451.5h2M374 452.5h1M375 453.5h1M376 454.5h1M377 455.5h1M378 456.5h1M379 457.5h3M382 458.5h4M386 459.5h4M390 460.5h9M399 461.5h7M406 462.5h1M407 463.5h1M407 464.5h1M408 465.5h1M409 466.5h1M410 467.5h1M410 468.5h1M411 469.5h1M412 470.5h1M413 471.5h1M413 472.5h1M414 473.5h1M415 474.5h1M416 475.5h1M416 476.5h1M417 477.5h1M418 478.5h4M422 477.5h6M428 476.5h4M432 475.5h2M434 474.5h2M436 473.5h2M438 472.5h2M440 471.5h2M442 470.5h2M444 469.5h2M446 468.5h3M449 467.5h4M453 466.5h3M456 465.5h5M461 464.5h6M467 463.5h3M470 464.5h2M472 465.5h2M474 466.5h1M475 467.5h2M477 468.5h1M478 469.5h2M480 470.5h2M482 471.5h4M486 470.5h6M492 469.5h10M502 470.5h8M510 469.5h2M512 468.5h2M514 467.5h2M516 466.5h2M518 465.5h2M520 464.5h2M521 465.5h1M521 466.5h1M521 467.5h1M522 468.5h1M522 469.5h1M522 470.5h1M522 471.5h1M522 472.5h1M522 473.5h1M522 474.5h1M523 475.5h1M523 476.5h1M523 477.5h1M523 478.5h1M523 479.5h1M523 480.5h1M523 481.5h1M524 482.5h1M524 483.5h1M524 484.5h1M524 485.5h1M524 486.5h1M524 487.5h1M524 488.5h1M525 489.5h1M525 490.5h1M525 491.5h1M525 492.5h1M525 493.5h1M525 494.5h1M525 495.5h1M526 496.5h1M526 497.5h1M526 498.5h1M526 499.5h1M526 500.5h1M526 501.5h1M526 502.5h1M527 503.5h1M527 504.5h1M527 505.5h1M527 506.5h1M527 507.5h1M527 508.5h1M527 509.5h1M528 510.5h1M528 511.5h1M528 512.5h1M528 513.5h1M528 514.5h1M528 515.5h1M529 516.5h1M529 517.5h1M529 518.5h1M529 519.5h1M529 520.5h1M529 521.5h1M529 522.5h1M530 523.5h1M530 524.5h1M530 525.5h1M530 526.5h1M530 527.5h1M530 528.5h1M530 529.5h1M531 530.5h1M531 531.5h1M531 532.5h1M531 533.5h1M531 534.5h1M531 535.5h1M531 536.5h1M532 537.5h1M532 538.5h1M532 539.5h1M532 540.5h1M532 541.5h1M532 542.5h1M532 543.5h1M533 544.5h1M533 545.5h1M533 546.5h1M533 547.5h1M533 548.5h1M533 549.5h1M533 550.5h1M534 551.5h1M534 552.5h1M534 553.5h1M534 554.5h1M534 555.5h1M534 556.5h1M535 557.5h1M535 558.5h1M535 559.5h1M535 560.5h1M536 561.5h1M536 562.5h1M536 563.5h1M536 564.5h1M537 565.5h1M537 566.5h1M537 567.5h1M537 568.5h1M538 569.5h1M538 570.5h1M538 571.5h1M538 572.5h1M539 573.5h1M539 574.5h1M539 575.5h1M539 576.5h1M540 577.5h1M540 578.5h1M540 579.5h1M540 580.5h1M541 581.5h1M541 582.5h1M541 583.5h1M541 584.5h1M542 585.5h1M542 586.5h1M542 587.5h1M542 588.5h1M543 589.5h1M543 590.5h1M543 591.5h1M543 592.5h1M544 593.5h1M544 594.5h1M544 595.5h1M544 596.5h1M545 597.5h1M545 598.5h1M545 599.5h1M545 600.5h1M546 601.5h1M546 602.5h1M546 603.5h1M546 604.5h1M547 605.5h1M547 606.5h1M547 607.5h1M548 608.5h1M548 609.5h1M549 610.5h1M550 611.5h1M550 612.5h1M551 613.5h1M552 614.5h1M552 615.5h1M553 616.5h1M554 617.5h1M555 618.5h1M555 619.5h1M556 620.5h1M557 621.5h1M557 622.5h1M558 623.5h1M559 624.5h1M559 625.5h1M560 626.5h2M562 625.5h3M565 624.5h4M569 623.5h3M572 622.5h2M574 620.5h1M574 621.5h1M575 619.5h1M576 617.5h1M576 618.5h1M577 615.5h1M577 616.5h1M578 614.5h1M579 612.5h1M579 613.5h1M580 611.5h1M581 609.5h1M581 610.5h1M582 607.5h1M582 608.5h1M583 606.5h1M584 604.5h1M584 605.5h1M585 602.5h1M585 603.5h1M586 600.5h1M586 601.5h1M587 598.5h1M587 599.5h1M588 595.5h1M588 596.5h1M588 597.5h1M589 593.5h1M589 594.5h1M590 591.5h1M590 592.5h1M591 588.5h1M591 589.5h1M591 590.5h1M592 586.5h1M592 587.5h1M593 584.5h1M593 585.5h1M594 582.5h1M594 583.5h1M595 579.5h1M595 580.5h1M595 581.5h1M596 577.5h1M596 578.5h1M597 575.5h1M597 576.5h1M598 572.5h1M598 573.5h1M598 574.5h1M599 569.5h1M599 570.5h1M599 571.5h1M600 567.5h1M600 568.5h1M601 564.5h1M601 565.5h1M601 566.5h1M602 561.5h1M602 562.5h1M602 563.5h1M603 559.5h1M603 560.5h1M604 556.5h1M604 557.5h1M604 558.5h1M605 553.5h1M605 554.5h1M605 555.5h1M606 551.5h1M606 552.5h1M607 548.5h1M607 549.5h1M607 550.5h1M608 545.5h1M608 546.5h1M608 547.5h1M609 543.5h1M609 544.5h1M610 540.5h1M610 541.5h1M610 542.5h1M611 537.5h1M611 538.5h1M611 539.5h1M612 533.5h1M612 534.5h1M612 535.5h1M612 536.5h1M613 530.5h1M613 531.5h1M613 532.5h1M614 526.5h1M614 527.5h1M614 528.5h1M614 529.5h1M615 523.5h1M615 524.5h1M615 525.5h1M616 519.5h1M616 520.5h1M616 521.5h1M616 522.5h1M617 515.5h1M617 516.5h1M617 517.5h1M617 518.5h1M618 512.5h1M618 513.5h1M618 514.5h1M619 508.5h1M619 509.5h1M619 510.5h1M619 511.5h1M620 505.5h1M620 506.5h1M620 507.5h1M621 501.5h1M621 502.5h1M621 503.5h1M621 504.5h1M622 498.5h1M622 499.5h1M622 500.5h1M623 494.5h1M623 495.5h1M623 496.5h1M623 497.5h1M624 492.5h1M624 493.5h1M625 490.5h1M625 491.5h1M626 489.5h1M627 488.5h1M628 486.5h1M628 487.5h1M629 485.5h1M630 483.5h1M630 484.5h1M631 482.5h1M632 481.5h1M633 479.5h1M633 480.5h1M634 478.5h1M635 477.5h1M636 475.5h1M636 476.5h1M637 474.5h1M638 473.5h1M639 472.5h1M640 471.5h1M641 470.5h1M642 469.5h1M643 468.5h1M644 467.5h1M645 466.5h1M646 465.5h1M647 464.5h1M648 463.5h1M649 462.5h1M650 461.5h1M651 460.5h2M653 459.5h1M654 458.5h2M656 457.5h1M657 456.5h1M658 455.5h2M660 454.5h1M661 453.5h2M663 451.5h1M663 452.5h1M664 449.5h1M664 450.5h1M665 447.5h1M665 448.5h1M666 445.5h1M666 446.5h1M667 443.5h1M667 444.5h1M668 441.5h1M668 442.5h1M669 439.5h1M669 440.5h1M670 437.5h1M670 438.5h1M671 435.5h1M671 436.5h1M672 433.5h1M672 434.5h1M673 431.5h1M673 432.5h1M674 429.5h1M674 430.5h1M675 427.5h1M675 428.5h1M676 426.5h2M678 425.5h2M680 424.5h2M682 423.5h2M684 422.5h2M686 421.5h2M688 420.5h5M693 421.5h6M699 422.5h6M705 421.5h6M711 420.5h5M716 421.5h2M718 422.5h3M721 423.5h3M724 424.5h2M726 425.5h3M729 426.5h2M731 427.5h3M734 428.5h3M737 429.5h2M739 430.5h5M744 431.5h6M750 432.5h7M757 433.5h6M763 434.5h6M769 435.5h4M773 436.5h4M777 437.5h4M781 438.5h2M783 439.5h2M785 440.5h2M787 441.5h2M789 442.5h2M791 443.5h2M793 444.5h2M795 445.5h2M797 446.5h1M798 447.5h2M800 448.5h1M801 449.5h2M803 450.5h2M805 451.5h2M807 452.5h2M809 453.5h2M811 454.5h2M813 455.5h2M815 456.5h2M817 457.5h3M820 458.5h2M822 459.5h2M824 460.5h2M826 461.5h2M828 462.5h2M830 463.5h2M832 464.5h2M834 465.5h2M836 466.5h2M838 467.5h2M840 468.5h2M842 469.5h2M844 470.5h1M845 471.5h1M846 472.5h1M847 473.5h1M848 474.5h1M849 475.5h1M849 476.5h1M850 477.5h1M851 478.5h1M852 479.5h1M853 480.5h1M854 481.5h1M855 482.5h1M856 483.5h7M863 484.5h7M870 485.5h2M872 486.5h1M873 487.5h2M875 488.5h1M876 489.5h1M877 490.5h2M879 491.5h1M880 492.5h2M882 493.5h2M884 494.5h2M886 495.5h3M889 496.5h3M892 497.5h2M894 498.5h4M898 499.5h4M902 500.5h4M906 501.5h4M910 502.5h2M912 503.5h3M915 504.5h3M918 505.5h2M920 506.5h3M923 507.5h2M925 508.5h3M928 509.5h3M931 510.5h2M933 511.5h3M936 512.5h2M938 513.5h2M940 514.5h2M942 515.5h2M944 516.5h2M946 517.5h2M948 518.5h3M951 519.5h4M955 520.5h3M958 521.5h15M973 520.5h2M975 519.5h1M976 518.5h2M978 517.5h1M979 516.5h1M980 515.5h2M982 514.5h1M983 513.5h2M985 512.5h2M987 513.5h3M990 514.5h4M994 515.5h3M997 516.5h2M999 517.5h1M1000 518.5h1M1001 519.5h1M1002 520.5h1M1003 521.5h1M1004 522.5h1M1004 523.5h1M1005 524.5h1M1006 525.5h1M1007 526.5h1M1008 527.5h1M1009 528.5h1M1010 529.5h1M1011 530.5h3M1014 529.5h4M1018 528.5h4M1022 527.5h3" fill="none" stroke="#ffffff" stroke-width="1"/>
<rect x="1072" y="522" width="48" height="17" fill="#000080"/>
<rect x="1072" y="522" width="48" height="1" fill="#c40000"/>
<rect x="1072" y="538" width="48" height="1" fill="#c40000"/>
<rect x="551" y="631" width="77" height="15" fill="#000080"/>
<rect x="550" y="630" width="1" height="17" fill="#c40000"/>
<rect x="628" y="630" width="1" height="17" fill="#c40000"/>
<g shape-rendering="geometricPrecision"><rect x="5.6" y="3.6" width="10.8" height="9.8" rx="2.3" fill="none" stroke="#828282" stroke-width="1.2"/><rect x="12" y="5" width="3" height="7" fill="#909090"/></g>
<g shape-rendering="geometricPrecision"><rect x="1055.6" y="24.6" width="10.8" height="9.8" rx="2.3" fill="none" stroke="#828282" stroke-width="1.2"/><rect x="1062" y="26" width="3" height="7" fill="#909090"/></g>
<path d="M1042.5 24.5 L1047.5 29.5 L1042.5 34.5 L1037.5 29.5 Z" fill="none" stroke="#7c7c7c" stroke-width="1"/>
<g shape-rendering="geometricPrecision"><circle cx="125" cy="29" r="6" fill="#777"/><path d="M122 27.8 L125 30.8 L128 27.8" fill="none" stroke="#000" stroke-width="1.3"/></g>
<g shape-rendering="geometricPrecision"><circle cx="8" cy="405" r="6" fill="#777"/><path d="M5 403.8 L8 406.8 L11 403.8" fill="none" stroke="#000" stroke-width="1.3"/></g>
</svg>
<div id="txt">
<span class="t" style="left:28px;top:2px;color:#c0c0c0;">分时</span>
<span class="t" style="left:61px;top:2px;color:#c0c0c0;">1分钟</span>
<span class="t" style="left:100px;top:2px;color:#c0c0c0;">5分钟</span>
<span class="t" style="left:139px;top:2px;color:#c0c0c0;">15分钟</span>
<span class="t" style="left:185px;top:2px;color:#c0c0c0;">30分钟</span>
<span class="t" style="left:231px;top:2px;color:#c0c0c0;">60分钟</span>
<span class="t" style="left:312px;top:2px;color:#c0c0c0;">周线</span>
<span class="t" style="left:345px;top:2px;color:#c0c0c0;">月线</span>
<span class="t" style="left:378px;top:2px;color:#c0c0c0;">多周期</span>
<span class="t" style="left:422px;top:2px;color:#c0c0c0;">更多</span>
<span class="t" style="left:277px;top:2px;color:#30e8f0;">日线</span>
<span class="t" style="left:450px;top:2px;color:#c0c0c0;display:inline-block;transform:scale(.72,1.4);transform-origin:50% 55%">&gt;</span>
<span class="t" style="left:806px;top:2px;width:34px;text-align:center">复权</span>
<span class="t" style="left:840px;top:2px;width:34px;text-align:center">叠加</span>
<span class="t" style="left:875px;top:2px;width:34px;text-align:center">多股</span>
<span class="t" style="left:910px;top:2px;width:34px;text-align:center">统计</span>
<span class="t" style="left:945px;top:2px;width:34px;text-align:center">画线</span>
<span class="t" style="left:980px;top:2px;width:34px;text-align:center">F10</span>
<span class="t" style="left:1015px;top:2px;width:34px;text-align:center">标记</span>
<span class="t" style="left:1050px;top:2px;width:34px;text-align:center">+自选</span>
<span class="t" style="left:1085px;top:2px;width:36px;text-align:center">返回</span>
<span class="t" style="left:3px;top:22px;color:#c0c0c0;letter-spacing:-1px">ST宁科</span>
<span class="t" style="left:44px;top:22px;color:#c0c0c0;letter-spacing:-0.3px">(日线.前复权)</span>
<span class="t" style="left:18px;top:398px;color:#c0c0c0;">股朋指标网</span>
<span class="t" style="left:83px;top:398px;color:#fff;letter-spacing:-0.3px">MA1: 3.76</span>
<span class="t" style="left:141px;top:398px;color:#ffff00;letter-spacing:-0.3px">MA2: 3.79</span>
<span class="t" style="left:199px;top:398px;color:#ff00ff;letter-spacing:-0.3px">MA3: 3.85</span>
<span class="t ax" style="left:1075px;top:43px;width:40px;text-align:right;color:#ff3232">4.40</span>
<span class="t ax" style="left:1075px;top:89px;width:40px;text-align:right;color:#ff3232">4.20</span>
<span class="t ax" style="left:1075px;top:136px;width:40px;text-align:right;color:#ff3232">4.00</span>
<span class="t ax" style="left:1075px;top:182px;width:40px;text-align:right;color:#ff3232">3.80</span>
<span class="t ax" style="left:1075px;top:228px;width:40px;text-align:right;color:#ff3232">3.60</span>
<span class="t ax" style="left:1075px;top:274px;width:40px;text-align:right;color:#ff3232">3.40</span>
<span class="t ax" style="left:1075px;top:321px;width:40px;text-align:right;color:#ff3232">3.20</span>
<span class="t ax" style="left:1075px;top:367px;width:40px;text-align:right;color:#ff3232">3.00</span>
<span class="t ax" style="left:1075px;top:424px;width:40px;text-align:right;color:#ff3232">4.10</span>
<span class="t ax" style="left:1075px;top:452px;width:40px;text-align:right;color:#ff3232">4.00</span>
<span class="t ax" style="left:1075px;top:481px;width:40px;text-align:right;color:#ff3232">3.90</span>
<span class="t ax" style="left:1075px;top:509px;width:40px;text-align:right;color:#ff3232">3.80</span>
<span class="t ax" style="left:1075px;top:538px;width:40px;text-align:right;color:#ff3232">3.70</span>
<span class="t ax" style="left:1075px;top:567px;width:40px;text-align:right;color:#ff3232">3.60</span>
<span class="t ax" style="left:1075px;top:595px;width:40px;text-align:right;color:#ff3232">3.50</span>
<span class="t ax" style="left:1072px;top:523px;color:#d8d8d8;">3.72</span>
<span class="t" style="left:6px;top:632px;color:#ff3232;">2025年</span>
<span class="t" style="left:187px;top:632px;color:#ff3232;">11</span>
<span class="t" style="left:445px;top:632px;color:#ff3232;">12</span>
<span class="t" style="left:728px;top:632px;color:#ff3232;">1</span>
<span class="t" style="left:973px;top:632px;color:#ff3232;">2</span>
<span class="t" style="left:552px;top:632px;color:#d8d8d8;">2025/12/12/五</span>
</div>
<div id="strip">
<span class="s" style="top:29px;color:#e0e0e0;">笔</span>
<span class="s" style="top:49.0px;color:#e0e0e0;">综</span>
<span class="s" style="top:68.2px;color:#e0e0e0;">综</span>
<span class="s" style="top:87.4px;color:#e0e0e0;">综</span>
<span class="s" style="top:106.6px;color:#e0e0e0;">综</span>
<span class="s" style="top:125.8px;color:#e0e0e0;">综</span>
<span class="s" style="top:145.5px;color:#e0e0e0;">风</span>
<span class="s" style="top:164.5px;color:#e0e0e0;">风</span>
<span class="s" style="top:183.5px;color:#e0e0e0;">风</span>
<span class="s" style="top:202.5px;color:#e0e0e0;">风</span>
<span class="s" style="top:221.5px;color:#e0e0e0;">风</span>
<span class="s" style="top:244px;color:#e0e0e0;">开</span>
<span class="s" style="top:263px;color:#e0e0e0;">资</span>
<span class="s" style="top:282px;color:#e0e0e0;">资</span>
<span class="s" style="top:301px;color:#e0e0e0;">淡</span>
<span class="s" style="top:320px;color:#e0e0e0;">外</span>
<span class="s" style="top:340px;color:#e0e0e0;">技</span>
<span class="s" style="top:359px;color:#e0e0e0;">术</span>
<span class="s" style="top:378px;color:#e0e0e0;">叫</span>
<span class="s" style="top:398px;color:#e8e800;">自</span>
<span class="s" style="top:418px;color:#e0e0e0;">交</span>
<span class="s b" style="top:439.0px;color:#e4e4e4">1</span>
<span class="s b" style="top:457.1px;color:#e4e4e4">1</span>
<span class="s b" style="top:475.1px;color:#e4e4e4">1</span>
<span class="s b" style="top:493.1px;color:#e4e4e4">1</span>
<span class="s b" style="top:511.2px;color:#e4e4e4">1</span>
<span class="s b" style="top:529.2px;color:#e4e4e4">1</span>
<span class="s b" style="top:547.3px;color:#e4e4e4">1</span>
<span class="s b" style="top:565.4px;color:#e4e4e4">1</span>
<span class="s b" style="top:583.4px;color:#e4e4e4">1</span>
</div>
<div id="bot"><span class="t" style="left:8px;top:1px;color:#fff">指标</span><span class="t" style="left:48px;top:1px;color:#fff">+</span><span class="t" style="left:826px;top:1px;color:#fff">+</span><span class="t" style="left:844px;top:1px;color:#54ffff">设置</span></div>
<div id="wm"><div id="wm1">乐淘公式网</div>
<div id="wm2">www.60lt.com</div></div>
</body></html>
